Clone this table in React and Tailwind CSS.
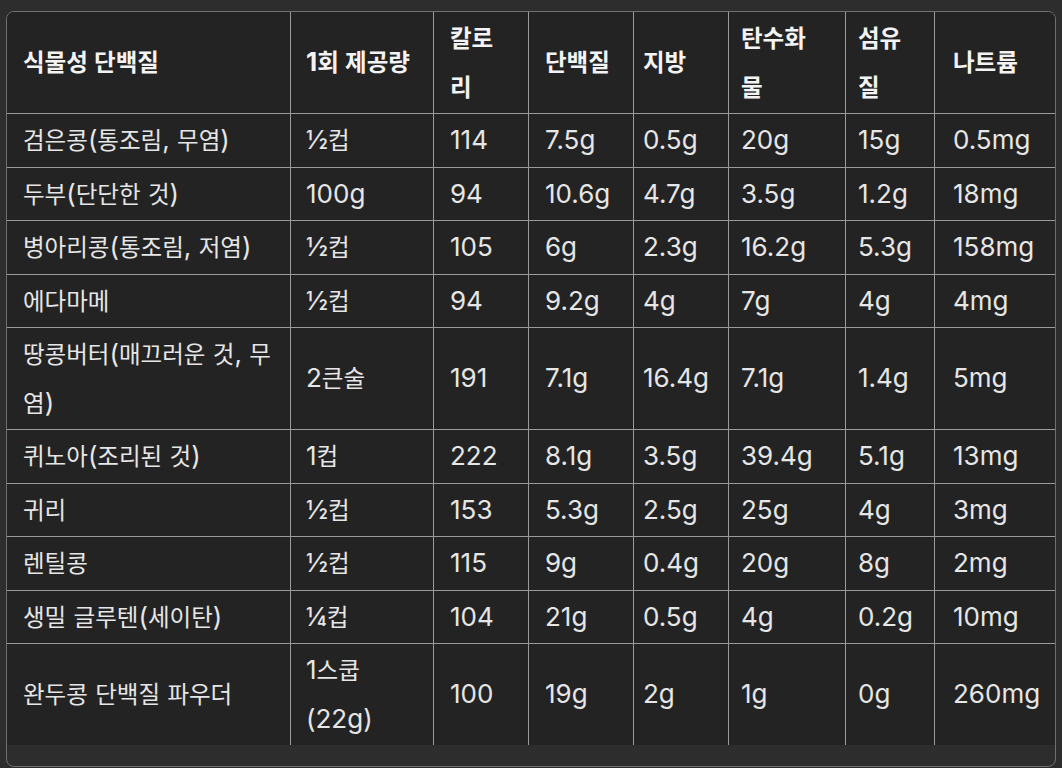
import React from "react";

const cols = [
  { w: "w-[284px]", pl: "pl-[16px]" },
  { w: "w-[143px]", pl: "pl-[15px]" },
  { w: "w-[95px]", pl: "pl-[16px]" },
  { w: "w-[105px]", pl: "pl-[16px]" },
  { w: "w-[95px]", pl: "pl-[9px]" },
  { w: "w-[117px]", pl: "pl-[12px]" },
  { w: "w-[89px]", pl: "pl-[12px]" },
  { w: "w-[120px]", pl: "pl-[18px]" },
];

const header = [
  "식물성 단백질",
  "1회 제공량",
  ["칼로", "리"],
  "단백질",
  "지방",
  ["탄수화", "물"],
  ["섬유", "질"],
  "나트륨",
];

const rows = [
  ["검은콩(통조림, 무염)", "½컵", "114", "7.5g", "0.5g", "20g", "15g", "0.5mg"],
  ["두부(단단한 것)", "100g", "94", "10.6g", "4.7g", "3.5g", "1.2g", "18mg"],
  ["병아리콩(통조림, 저염)", "½컵", "105", "6g", "2.3g", "16.2g", "5.3g", "158mg"],
  ["에다마메", "½컵", "94", "9.2g", "4g", "7g", "4g", "4mg"],
  [["땅콩버터(매끄러운 것, 무", "염)"], "2큰술", "191", "7.1g", "16.4g", "7.1g", "1.4g", "5mg"],
  ["퀴노아(조리된 것)", "1컵", "222", "8.1g", "3.5g", "39.4g", "5.1g", "13mg"],
  ["귀리", "½컵", "153", "5.3g", "2.5g", "25g", "4g", "3mg"],
  ["렌틸콩", "½컵", "115", "9g", "0.4g", "20g", "8g", "2mg"],
  ["생밀 글루텐(세이탄)", "¼컵", "104", "21g", "0.5g", "4g", "0.2g", "10mg"],
  ["완두콩 단백질 파우더", ["1스쿱", "(22g)"], "100", "19g", "2g", "1g", "0g", "260mg"],
];

function Mixed({ text }) {
  const parts = text.split(/([\uAC00-\uD7A3\u3131-\u318E]+)/).filter((p) => p !== "");
  return (
    <>
      {parts.map((p, i) =>
        /[\uAC00-\uD7A3\u3131-\u318E]/.test(p) ? (
          <span key={i} className="text-[23.5px] leading-none">
            {p}
          </span>
        ) : (
          <span key={i}>{p}</span>
        )
      )}
    </>
  );
}

function Content({ v }) {
  if (Array.isArray(v)) {
    return (
      <span className="block">
        {v.map((l, i) => (
          <span key={i} className="block whitespace-nowrap">
            <Mixed text={l} />
          </span>
        ))}
      </span>
    );
  }
  return (
    <span className="block whitespace-nowrap">
      <Mixed text={v} />
    </span>
  );
}

function Row({ cells, head, last }) {
  return (
    <div className={`flex ${last ? "" : "border-b border-[#9a9a9a]"}`}>
      {cells.map((c, i) => (
        <div
          key={i}
          className={`${cols[i].w} ${cols[i].pl} shrink-0 flex items-center py-[2px] leading-[48.5px] ${
            i < 7 ? "border-r border-[#9a9a9a]" : ""
          } ${head ? "font-bold text-[#f3f3f3]" : "text-[#e6e6e6]"}`}
        >
          <Content v={c} />
        </div>
      ))}
    </div>
  );
}

export default function App() {
  return (
    <div
      className="w-[1062px] h-[768px] overflow-hidden bg-[#2d2d2d] pt-[11px] px-[6px] text-[26px]"
      style={{ fontFamily: 'Inter, "Noto Sans CJK KR", "Noto Sans", sans-serif' }}
    >
      <div className="rounded-[8px] border border-[#707070] overflow-hidden bg-[#2d2d2d]">
        <div className="bg-[#232323]">
          <Row cells={header} head />
          {rows.map((r, i) => (
            <Row key={i} cells={r} last={i === rows.length - 1} />
          ))}
        </div>
        <div className="h-[21px]" />
      </div>
    </div>
  );
}
